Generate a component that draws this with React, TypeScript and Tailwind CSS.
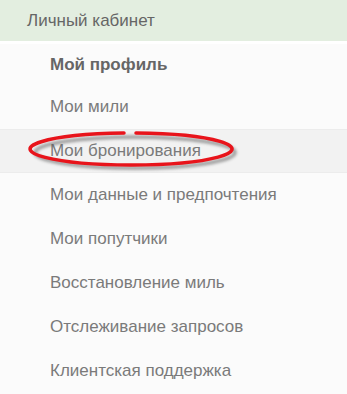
import React from 'react';

const items: { label: string; bold?: boolean; active?: boolean }[] = [
  { label: 'Мой профиль', bold: true },
  { label: 'Мои мили' },
  { label: 'Мои бронирования', active: true },
  { label: 'Мои данные и предпочтения' },
  { label: 'Мои попутчики' },
  { label: 'Восстановление миль' },
  { label: 'Отслеживание запросов' },
  { label: 'Клиентская поддержка' },
];

const App: React.FC = () => {
  return (
    <div className="relative w-[347px] h-[394px] overflow-hidden bg-[#fbfbfb] font-['Liberation_Sans',Arial,sans-serif]">
      <div className="h-[41px] bg-[#e3eee0] flex items-center pl-[27px] text-[17px] text-[#666]">
        Личный кабинет
      </div>
      <div className="h-[3px] bg-white" />
      <ul>
        {items.map((it) => (
          <li
            key={it.label}
            className={
              it.active
                ? 'h-[44px] flex items-center pl-[50px] text-[17px] bg-[#f2f2f2] border-t border-b border-[#ececec] text-[#7a7a7a]'
                : it.bold
                ? 'h-[41px] flex items-center pl-[50px] text-[17px] font-bold text-[#666]'
                : 'h-[44px] flex items-center pl-[50px] text-[17px] text-[#7a7a7a]'
            }
          >
            {it.label}
          </li>
        ))}
      </ul>
      {/* red marker ellipse round the active item */}
      <svg
        className="absolute left-[26px] top-[128px] pointer-events-none"
        width="216"
        height="46"
        viewBox="0 0 216 46"
      >
        <defs>
          <filter id="sh" x="-10%" y="-40%" width="130%" height="200%">
            <feGaussianBlur stdDeviation="1.6" />
          </filter>
        </defs>
        <ellipse cx="109" cy="24.5" rx="100" ry="15.5" fill="none" stroke="#555" strokeWidth="3.5" opacity="0.55" filter="url(#sh)" />
        <path
          d="M 98 5.04 A 101 16 0 1 0 110 5.02"
          fill="none"
          stroke="#e8141b"
          strokeWidth="3.5"
          strokeLinecap="round"
        />
      </svg>
    </div>
  );
};

export default App;
